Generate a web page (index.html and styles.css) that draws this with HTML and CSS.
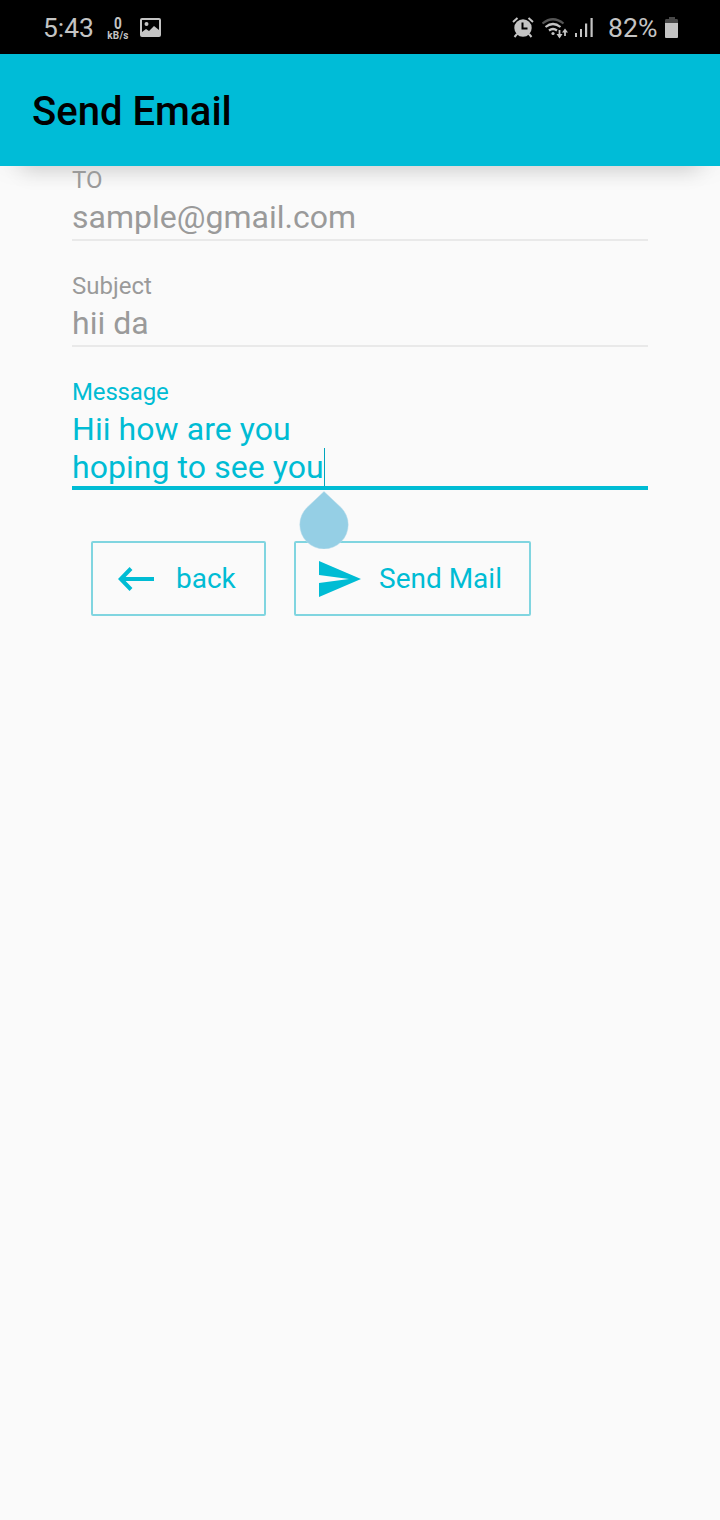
FILE: index.html
```html
<!DOCTYPE html>
<html lang="en">
<head>
<meta charset="utf-8">
<title>Send Email</title>
<link rel="stylesheet" href="styles.css">
</head>
<body>
<header class="status">
  <div class="status-left">
    <span class="clock">5:43</span>
    <div class="speed"><span class="speed-value">0</span><span class="speed-unit">kB/s</span></div>
    <svg class="picture" width="22" height="20" viewBox="0 0 22 20"><path fill="#c4c4c4" fill-rule="evenodd" d="M2 0H19Q21 0 21 2V17Q21 19 19 19H2Q0 19 0 17V2Q0 0 2 0ZM2 2V14L6 11L9 13L14 8L19 12V2ZM6.500 4A2 2 0 1 1 6.500 8A2 2 0 1 1 6.500 4Z"/></svg>
  </div>
  <div class="status-right">
    <svg class="alarm" width="22" height="22" viewBox="0 0 22 22"><g fill="none" stroke="#c4c4c4" stroke-width="2"><path d="M1 5L5.500 1M21 5L16.500 1"/><path d="M5 17L2.500 20M17 17L19.500 20"/></g><circle cx="11" cy="11" r="8.700" fill="#c4c4c4"/><path d="M10.500 5.500V11.500H15.500" fill="none" stroke="#000" stroke-width="2"/></svg>
    <svg class="wifi" width="28" height="22" viewBox="0 0 28 22"><g fill="none" stroke="#c4c4c4" stroke-width="2.200"><path stroke="#555" d="M.5 5.500Q11 -3 21.500 5.500"/><path d="M3.500 9Q11 3 18.500 9M7 12.500Q11 9.500 15 12.500"/></g><circle cx="11" cy="15.500" r="1.600" fill="#c4c4c4"/><g fill="none" stroke="#c4c4c4" stroke-width="1.800"><path d="M17.500 12V18.500M23 18V12.500"/></g><path fill="#c4c4c4" d="M14.500 16H20.500L17.500 20.500ZM20 14.500H26L23 10.500Z"/></svg>
    <svg class="signal" width="19" height="20" viewBox="0 0 19 20"><path fill="#c4c4c4" d="M0 15H2V19H0ZM5 11H7V19H5ZM10 5.500H12.200V19H10ZM15.500 0H17.700V19H15.500Z"/></svg>
    <span class="percent">82%</span>
    <svg class="battery" width="14" height="22" viewBox="0 0 14 22"><path fill="#484848" d="M4 0H10V2H12Q13 2 13 3.500V6H0V3.500Q0 2 1 2H4Z"/><path fill="#c4c4c4" d="M0 6H13V20Q13 21 12 21H1Q0 21 0 20Z"/></svg>
  </div>
</header>
<div class="appbar"><h1>Send Email</h1></div>
<main class="form">
  <div class="field"><div class="label">TO</div><div class="value">sample@gmail.com</div></div>
  <div class="field"><div class="label">Subject</div><div class="value">hii da</div></div>
  <div class="field active"><div class="label">Message</div><div class="value">Hii how are you<br>hoping to see you<span class="caret"><svg class="handle" width="50" height="58" viewBox="0 0 50 58"><path fill="#95cfe5" stroke="#b9dcea" stroke-width=".5" d="M25 .5L42 16.500A24.200 24.200 0 1 1 8 16.500Z"/></svg></span></div></div>
  <div class="actions">
    <button class="btn back"><svg width="36" height="26" viewBox="0 0 36 26"><path fill="none" stroke="#00bcd4" stroke-width="4" d="M13 2.500L2.800 13L13 23.500M3 13H36"/></svg>back</button>
    <button class="btn send"><svg width="42" height="36" viewBox="2 3 21 18"><path fill="#00bcd4" d="M2 21L23 12L2 3V10L17 12L2 14Z"/></svg>Send Mail</button>
  </div>
</main>
</body>
</html>
```
FILE: styles.css
```css
* { box-sizing: border-box; }
body {
  margin: 0;
  min-height: 1520px;
  background: #fafafa;
  font-family: Roboto, sans-serif;
}
.status {
  display: flex;
  justify-content: space-between;
  height: 54px;
  padding: 0 41px 0 43px;
  background: #000;
  color: #c4c4c4;
}
.status-left, .status-right { display: flex; align-items: center; height: 54px; }
.clock, .percent { font-size: 26.6px; line-height: 32px; padding-top: 2px; }
.clock { width: 51px; font-size: 26.4px; white-space: nowrap; }
.speed { display: flex; flex-direction: column; align-items: center; width: 24px; margin-left: 12px; padding-top: 1px; }
.speed-value { font-size: 17px; font-weight: 700; line-height: 16px; transform: scaleX(.8); }
.speed-unit { font-size: 10px; font-weight: 700; line-height: 10px; letter-spacing: .2px; }
.picture { margin: 2px 0 0 10px; }
.alarm { margin-top: 1px; }
.wifi { margin: 3px 0 0 8px; }
.signal { margin: 2px 0 0 5px; }
.percent { width: 50px; margin-left: 14px; white-space: nowrap; }
.battery { margin: 1px 0 0 7px; }
.appbar {
  display: flex;
  align-items: center;
  height: 112px;
  padding: 3px 32px 0;
  background: #00bcd7;
  box-shadow: 0 26px 20px -22px rgba(0, 0, 0, .16), 0 4px 24px rgba(0, 0, 0, .04);
}
h1 { margin: 0; font-size: 40px; font-weight: 500; line-height: 49px; color: #000; }
.form { padding: 0 72px; }
.field { margin-bottom: 31px; border-bottom: 2px solid #e9e9e9; color: #9a9a9a; }
.label { font-size: 24px; line-height: 28px; }
.value { margin-top: 4px; padding-bottom: 3px; font-size: 32px; line-height: 38px; }
.active { margin-bottom: 51px; border-bottom: 4px solid #00bcd4; color: #00bcd4; }
.active .label { letter-spacing: -.15px; }
.active .value { padding-bottom: 0; letter-spacing: .06px; }
.caret {
  position: relative;
  display: inline-block;
  width: 1px;
  height: 38px;
  vertical-align: top;
  background: #00a5bd;
}
.handle { position: absolute; left: -25px; top: 43px; }
.actions { display: flex; gap: 28px; padding-left: 19px; }
.btn {
  display: flex;
  align-items: center;
  height: 75px;
  padding: 0;
  border: 2px solid #80d5e0;
  border-radius: 2px;
  background: transparent;
  color: #00bcd4;
  font-family: inherit;
  font-size: 28px;
  line-height: 34px;
}
.back { width: 175px; padding-left: 25px; gap: 22px; }
.send { width: 237px; padding-left: 23px; gap: 18px; }
```
